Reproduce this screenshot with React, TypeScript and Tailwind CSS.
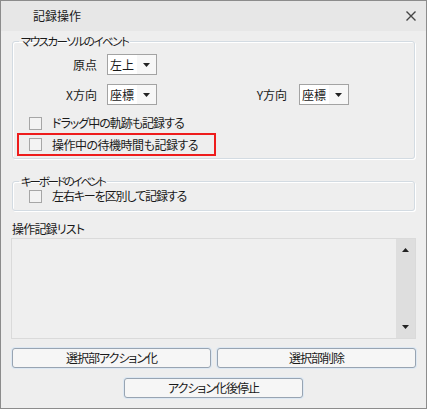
import React from 'react';

// --- Small pieces ---
const Caret = ({ up = false }: { up?: boolean }) => (
  <svg width="7" height="4" viewBox="0 0 7 4" className="block">
    {up ? <polygon points="0,4 7,4 3.5,0" fill="#222" /> : <polygon points="0,0 7,0 3.5,4" fill="#222" />}
  </svg>
);

const Combo = ({ value }: { value: string }) => (
  <div className="flex h-[21px] w-[50px] border border-[#a3a3a3] bg-white">
    <div className="flex flex-1 items-center pl-[2px] text-[12px] leading-none text-[#1a1a1a]">{value}</div>
    <div className="flex w-[19px] items-center justify-center bg-[#f7f7f7]">
      <Caret />
    </div>
  </div>
);

const Check = ({ label, track }: { label: string; track: string }) => (
  <div className="flex items-center gap-[10px]">
    <span className="block h-[13px] w-[13px] border border-[#a6a6a6] bg-[#f3f3f3]" />
    <span className={`text-[12px] leading-none text-[#1a1a1a] ${track}`}>{label}</span>
  </div>
);

const Group = ({ title, track, className, children }: { title: string; track: string; className?: string; children: React.ReactNode }) => (
  <fieldset
    className={`mx-[1px] rounded-[3px] border border-[#d3dbe2] shadow-[inset_1px_1px_0_#ffffff,1px_1px_0_#ffffff] ${className ?? ''}`}
  >
    <legend className={`ml-[6px] px-[2px] text-[11.5px] leading-[16px] text-[#1a1a1a] ${track}`}>{title}</legend>
    {children}
  </fieldset>
);

const Button = ({ label, className }: { label: string; className?: string }) => (
  <button
    className={`flex h-[20px] items-center justify-center rounded-[3px] border border-[#98a4b2] bg-[#f6f6f6] text-[12px] leading-none tracking-[-1px] text-[#1a1a1a] shadow-[0_0_0_1px_#dde8f3] ${className ?? ''}`}
  >
    {label}
  </button>
);

export default function App() {
  return (
    <div className="flex h-[409px] w-[427px] flex-col border border-[#8c8c8c] bg-[#eeeeee] font-['Noto_Sans_CJK_JP',sans-serif] [font-feature-settings:'palt']">
      {/* Title bar */}
      <div className="flex h-[30px] items-center justify-between bg-[#e7e7e7] pl-[32px] pr-[10px]">
        <span className="text-[12px] leading-none text-[#1a1a1a]">記録操作</span>
        <svg width="10" height="10" viewBox="0 0 10 10">
          <path d="M0.5 0.5 L9.5 9.5 M9.5 0.5 L0.5 9.5" stroke="#444" strokeWidth="1.4" />
        </svg>
      </div>

      {/* Body */}
      <div className="flex flex-1 flex-col px-[10px] pt-[2px]">
        <Group title="マウスカーソルのイベント" track="tracking-[-1.5px]" className="pb-[2px]">
          <div className="mt-[5px] flex h-[21px] items-center">
            <span className="w-[84px] text-right text-[12px] leading-none text-[#1a1a1a]">原点</span>
            <div className="ml-[10px]">
              <Combo value="左上" />
            </div>
          </div>
          <div className="mt-[9px] flex h-[21px] items-center">
            <span className="w-[84px] text-right text-[12px] leading-none text-[#1a1a1a]">X方向</span>
            <div className="ml-[10px]">
              <Combo value="座標" />
            </div>
            <span className="w-[130px] text-right text-[12px] leading-none text-[#1a1a1a]">Y方向</span>
            <div className="ml-[12px]">
              <Combo value="座標" />
            </div>
          </div>
          <div className="mt-[8px] flex h-[20px] items-center pl-[16px]">
            <Check label="ドラッグ中の軌跡も記録する" track="tracking-[-1px]" />
          </div>
          <div className="ml-[4px] flex h-[23px] w-[199px] items-center border-2 border-[#ee1c1c] pl-[10px]">
            <Check label="操作中の待機時間も記録する" track="tracking-[-0.5px]" />
          </div>
        </Group>

        <Group title="キーボードのイベント" track="tracking-[-2.2px]" className="mt-[14px] pb-[7px]">
          <div className="flex h-[14px] items-center pl-[16px]">
            <Check label="左右キーを区別して記録する" track="tracking-[-1.1px]" />
          </div>
        </Group>

        <div className="mt-[10px] pl-[1px] text-[12px] leading-[16px] tracking-[-0.8px] text-[#1a1a1a]">操作記録リスト</div>

        {/* List */}
        <div className="mt-[1px] flex h-[101px] border border-[#dadada] bg-[#efefef]">
          <div className="flex-1" />
          <div className="flex w-[19px] flex-col items-center justify-between bg-[#dedede] pb-[9px] pt-[9px]">
            <Caret up />
            <Caret />
          </div>
        </div>

        <div className="mt-[9px] flex gap-[6px] pl-[1px]">
          <Button label="選択部アクション化" className="w-[199px]" />
          <Button label="選択部削除" className="w-[199px]" />
        </div>
        <div className="mt-[10px] flex justify-center">
          <Button label="アクション化後停止" className="w-[179px]" />
        </div>
      </div>
    </div>
  );
}
